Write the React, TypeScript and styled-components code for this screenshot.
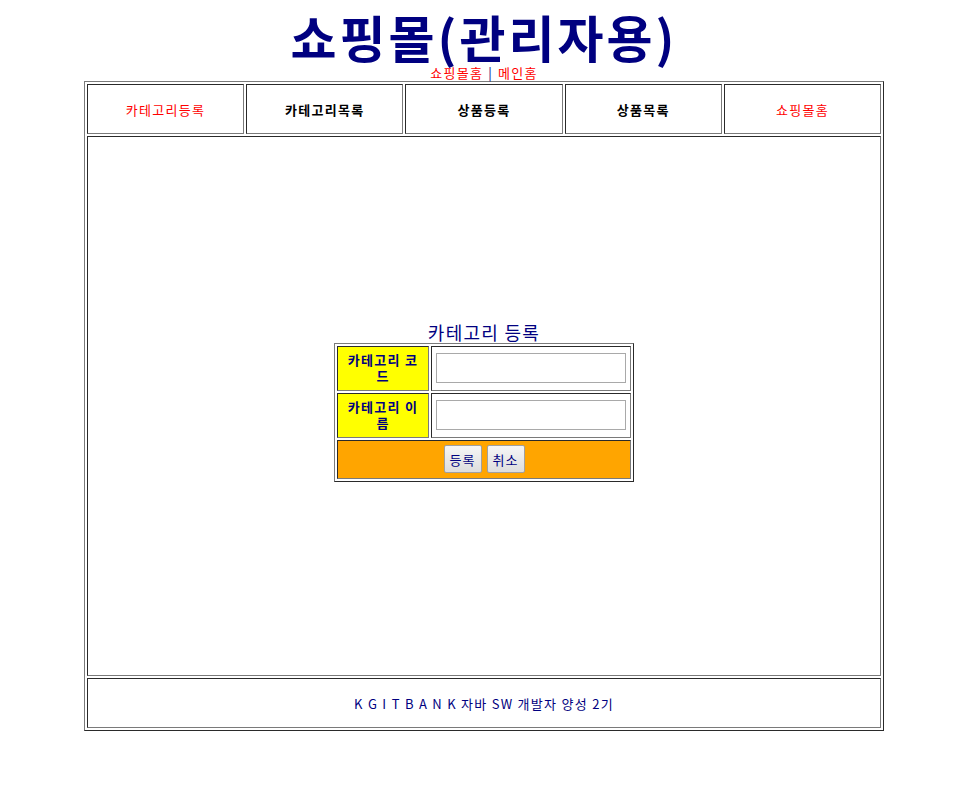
import React from "react";
import styled, { createGlobalStyle } from "styled-components";

const GlobalStyle = createGlobalStyle`
  body {
    margin: 8px;
    background: white;
    font-family: "Noto Sans CJK KR", "Liberation Sans", sans-serif;
    letter-spacing: 0.08em;
    color: #000080;
  }
`;

const Page = styled.div`
  width: 800px;
  margin-left: 76px;
`;

const Title = styled.h1`
  margin: 0;
  text-align: center;
  font-size: 50px;
  line-height: 56px;
  letter-spacing: 3px;
  font-weight: bold;
  color: #000080;
`;

const TopLinks = styled.div`
  text-align: center;
  font-size: 13px;
  line-height: 17px;
  > a {
    color: red;
    text-decoration: none;
  }
  > span {
    margin: 0 5px;
    color: #000080;
  }
`;

const Frame = styled.div`
  display: grid;
  grid-template-rows: 50px 540px 50px;
  gap: 2px;
  padding: 2px;
  border: 1px solid;
  border-color: #7a7a7a #2a2a2a #2a2a2a #7a7a7a;
`;

const Cell = styled.div`
  border: 1px solid;
  border-color: #2a2a2a #7a7a7a #7a7a7a #2a2a2a;
  display: flex;
  align-items: center;
  justify-content: center;
`;

const Menu = styled.div`
  display: grid;
  grid-template-columns: repeat(5, 1fr);
  gap: 2px;
`;

const MenuLink = styled.a<{ $active?: boolean }>`
  color: ${(p) => (p.$active ? "red" : "black")};
  font-size: 13px;
  font-weight: ${(p) => (p.$active ? "normal" : "bold")};
  text-decoration: none;
`;

const Content = styled(Cell)`
  flex-direction: column;
  padding-bottom: 10px;
`;

const Caption = styled.div`
  font-size: 18px;
  line-height: 22px;
  color: #000080;
`;

const FormTable = styled.div`
  display: grid;
  grid-template-columns: 92px 200px;
  gap: 2px;
  padding: 2px;
  border: 1px solid;
  border-color: #7a7a7a #2a2a2a #2a2a2a #7a7a7a;
`;

const Label = styled(Cell)`
  height: 43px;
  padding: 0 5px;
  background: yellow;
  font-size: 13px;
  font-weight: bold;
  line-height: 16px;
  text-align: center;
  color: #000080;
`;

const Field = styled(Cell)`
  height: 43px;
`;

const Input = styled.input`
  width: 190px;
  height: 30px;
  box-sizing: border-box;
  border: 1px solid #a9a9a9;
  padding: 0 4px;
`;

const ButtonRow = styled(Cell)`
  grid-column: 1 / span 2;
  height: 37px;
  gap: 5px;
  background: orange;
`;

const Button = styled.button`
  height: 28px;
  padding: 0 5px;
  border: 1px solid #a0a0a0;
  border-radius: 2px;
  background: linear-gradient(#f6f6f6, #dddddd);
  font-family: inherit;
  font-size: 13px;
  letter-spacing: 0.08em;
  color: #000080;
`;

const Footer = styled(Cell)`
  font-size: 13px;
  color: #000080;
`;

const menus = [
  { name: "카테고리등록", active: true },
  { name: "카테고리목록", active: false },
  { name: "상품등록", active: false },
  { name: "상품목록", active: false },
  { name: "쇼핑몰홈", active: true },
];

function App() {
  return (
    <Page>
      <GlobalStyle />
      <Title>쇼핑몰(관리자용)</Title>
      <TopLinks>
        <a href="#">쇼핑몰홈</a>
        <span>|</span>
        <a href="#">메인홈</a>
      </TopLinks>
      <Frame>
        <Menu>
          {menus.map((m) => (
            <Cell key={m.name}>
              <MenuLink href="#" $active={m.active}>
                {m.name}
              </MenuLink>
            </Cell>
          ))}
        </Menu>
        <Content>
          <Caption>카테고리 등록</Caption>
          <FormTable>
            <Label>카테고리 코드</Label>
            <Field>
              <Input type="text" />
            </Field>
            <Label>카테고리 이름</Label>
            <Field>
              <Input type="text" />
            </Field>
            <ButtonRow>
              <Button type="submit">등록</Button>
              <Button type="reset">취소</Button>
            </ButtonRow>
          </FormTable>
        </Content>
        <Footer>K G I T B A N K 자바 SW 개발자 양성 2기</Footer>
      </Frame>
    </Page>
  );
}

export default App;
